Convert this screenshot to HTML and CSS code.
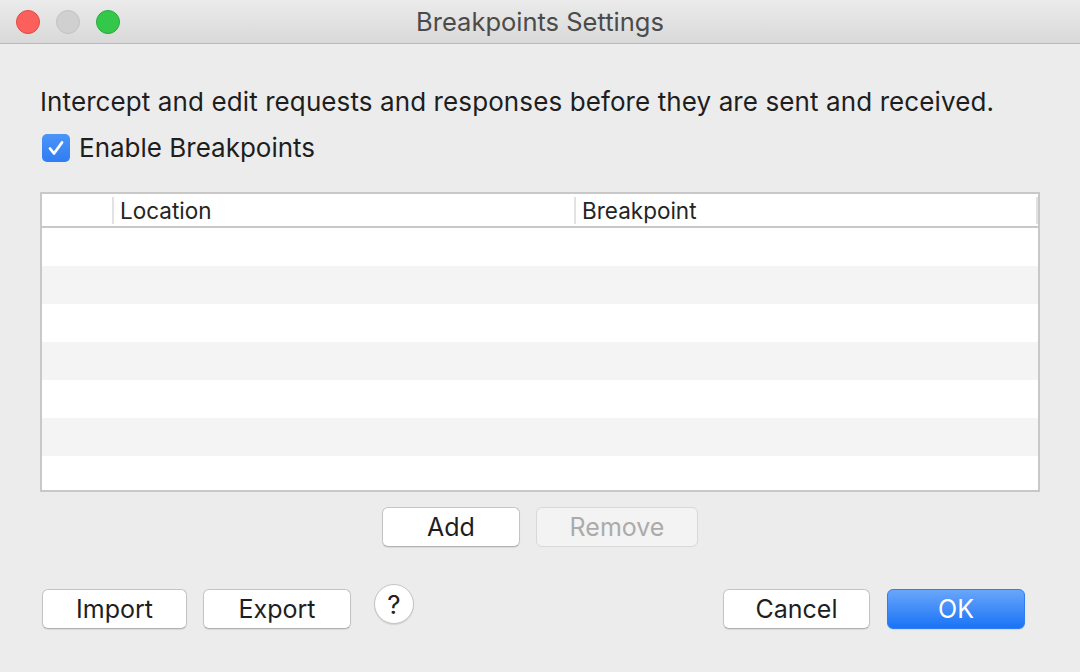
FILE: index.html
```html
<!DOCTYPE html>
<html>
<head>
<meta charset="utf-8">
<link rel="stylesheet" href="styles.css">
</head>
<body>
<div class="window">
  <div class="titlebar">
    <div class="lights">
      <span class="light red"></span>
      <span class="light gray"></span>
      <span class="light green"></span>
    </div>
    <div class="title">Breakpoints Settings</div>
  </div>
  <div class="content">
    <p class="desc">Intercept and edit requests and responses before they are sent and received.</p>
    <label class="check">
      <span class="box"><svg width="28" height="28" viewBox="0 0 28 28"><path d="M8 14.5 L12 19.5 L20 8.5" fill="none" stroke="#fff" stroke-width="2.8" stroke-linecap="round" stroke-linejoin="round"/></svg></span>
      <span class="check-label">Enable Breakpoints</span>
    </label>
    <div class="table">
      <div class="thead">
        <div class="th c0"></div>
        <div class="th c1">Location</div>
        <div class="th c2">Breakpoint</div>
      </div>
      <div class="tbody">
        <div class="row"></div>
        <div class="row alt"></div>
        <div class="row"></div>
        <div class="row alt"></div>
        <div class="row"></div>
        <div class="row alt"></div>
        <div class="row"></div>
      </div>
    </div>
    <div class="mid-buttons">
      <button class="btn add">Add</button>
      <button class="btn remove" disabled>Remove</button>
    </div>
    <div class="bottom">
      <div class="left">
        <button class="btn import">Import</button>
        <button class="btn export">Export</button>
        <button class="help">?</button>
      </div>
      <div class="right">
        <button class="btn cancel">Cancel</button>
        <button class="btn ok">OK</button>
      </div>
    </div>
  </div>
</div>
</body>
</html>
```

FILE: styles.css
```css
* { box-sizing: border-box; }
html, body { margin: 0; padding: 0; }
body {
  width: 1080px;
  height: 672px;
  background: #ececec;
  font-family: "Inter", "Roboto", "Noto Sans", sans-serif;
  color: #1e1e1e;
  overflow: hidden;
}
.window { width: 1080px; height: 672px; background: #ececec; }
.titlebar {
  height: 44px;
  background: linear-gradient(#ebebeb, #d9d9d9);
  border-bottom: 1.5px solid #b9b9b9;
  display: flex;
  align-items: center;
  justify-content: center;
  position: relative;
}
.lights {
  position: absolute;
  left: 16px;
  top: 10px;
  display: flex;
  gap: 16px;
}
.light {
  width: 24px;
  height: 24px;
  border-radius: 50%;
  display: block;
}
.red { background: #fc605c; border: 1px solid #de4a45; }
.gray { background: #d0d0d0; border: 1px solid #c2c2c2; }
.green { background: #34c84a; border: 1px solid #2aa83c; }
.title {
  font-size: 25.5px;
  color: #4b4b4b;
}
.content { padding: 0 40px; }
.desc {
  margin: 44px 0 0 0;
  font-size: 26px;
  line-height: 28px;
  letter-spacing: 0.1px;
}
.check {
  display: flex;
  align-items: center;
  height: 28px;
  margin-top: 18px;
  margin-left: 2px;
}
.box {
  width: 28px;
  height: 28px;
  border-radius: 5px;
  background: linear-gradient(#4c94f8, #2f7df3);
  display: block;
}
.box svg { display: block; }
.check-label {
  font-size: 26px;
  line-height: 28px;
  margin-left: 9px;
}
.table {
  margin-top: 30px;
  width: 1000px;
  height: 300px;
  border: 2px solid #c8c8c8;
  background: #fff;
  overflow: hidden;
}
.thead {
  height: 34px;
  display: flex;
  border-bottom: 2px solid #c8c8c8;
  align-items: center;
}
.th {
  font-size: 22.5px;
  color: #242424;
  height: 27px;
  line-height: 27px;
  border-right: 2px solid #e2e2e2;
}
.c0 { width: 72px; }
.c1 { width: 462px; padding-left: 6px; }
.c2 { width: 462px; padding-left: 6px; }
.tbody { height: 262px; overflow: hidden; }
.row { height: 38px; background: #fff; }
.row.alt { background: #f4f4f4; }
.mid-buttons {
  display: flex;
  justify-content: center;
  gap: 16px;
  margin-top: 15px;
}
.btn {
  font-family: inherit;
  font-size: 25px;
  height: 40px;
  border-radius: 6px;
  background: #fff;
  border: 1px solid #c4c4c4;
  border-bottom-color: #b0b0b0;
  box-shadow: 0 1px 1px rgba(0,0,0,0.08);
  color: #1e1e1e;
  padding: 0;
  margin: 0;
}
.add { width: 138px; }
.remove {
  width: 162px;
  background: #f3f3f3;
  color: #ababab;
  border-color: #d8d8d8;
  box-shadow: none;
}
.bottom {
  display: flex;
  justify-content: space-between;
  align-items: center;
  margin-top: 42px;
  padding-left: 2px;
  padding-right: 15px;
}
.left, .right { display: flex; align-items: center; }
.import { width: 145px; }
.export { width: 148px; margin-left: 16px; }
.help {
  width: 40px;
  height: 40px;
  border-radius: 50%;
  background: #fff;
  border: 1px solid #c4c4c4;
  box-shadow: 0 1px 1px rgba(0,0,0,0.1);
  font-family: inherit;
  font-size: 26px;
  color: #222;
  margin-left: 23px;
  margin-top: -10px;
  padding: 0;
}
.cancel { width: 147px; }
.ok {
  width: 138px;
  margin-left: 17px;
  background: linear-gradient(#69a6fa, #1a73f6);
  border: 1px solid #2f7ef2;
  color: #fff;
}
```
